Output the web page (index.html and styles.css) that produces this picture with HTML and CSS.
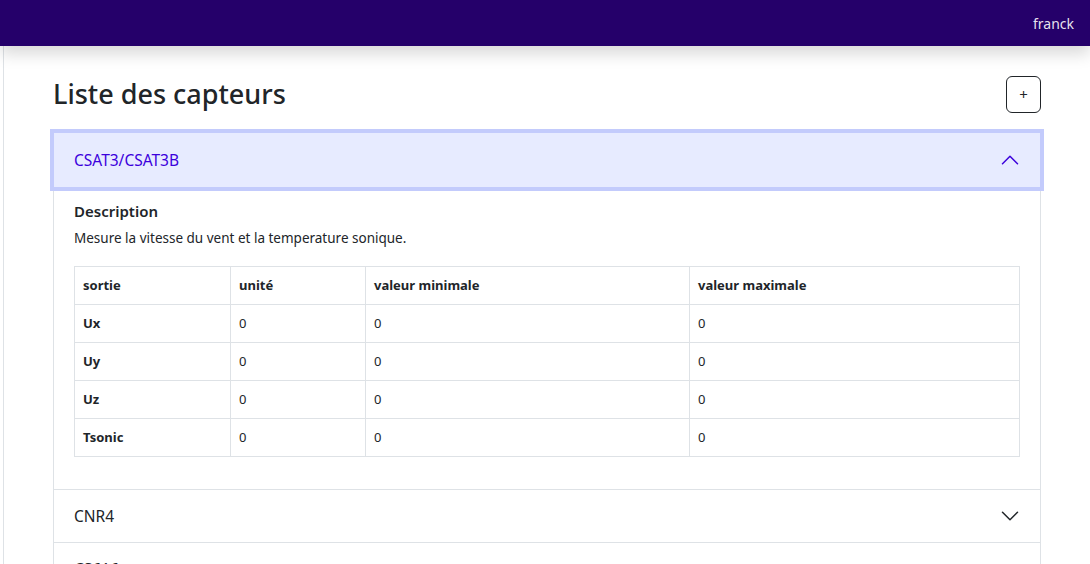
FILE: index.html
```html
<!DOCTYPE html>
<html lang="fr">
<head>
<meta charset="utf-8">
<title>Liste des capteurs</title>
<link rel="stylesheet" href="styles.css">
</head>
<body>
<header class="navbar">
  <span class="navbar-user">franck</span>
</header>
<div class="layout">
  <aside class="sidebar"></aside>
  <main class="main">
    <div class="title-row">
      <h1 class="page-title">Liste des capteurs</h1>
      <button class="btn-add" type="button">+</button>
    </div>
    <div class="accordion">
      <div class="acc-item">
        <button class="acc-button active" type="button">
          <span>CSAT3/CSAT3B</span>
          <svg class="chev up" viewBox="0 0 16 16" fill="none" stroke="currentColor" stroke-linecap="round" stroke-linejoin="round"><path d="M2 5L8 11L14 5"/></svg>
        </button>
        <div class="acc-body">
          <h5 class="desc-title">Description</h5>
          <p class="desc-text">Mesure la vitesse du vent et la temperature sonique.</p>
          <table class="table">
            <colgroup>
              <col class="c1"><col class="c2"><col class="c3"><col class="c4">
            </colgroup>
            <thead>
              <tr><th>sortie</th><th>unité</th><th>valeur minimale</th><th>valeur maximale</th></tr>
            </thead>
            <tbody>
              <tr><th>Ux</th><td>0</td><td>0</td><td>0</td></tr>
              <tr><th>Uy</th><td>0</td><td>0</td><td>0</td></tr>
              <tr><th>Uz</th><td>0</td><td>0</td><td>0</td></tr>
              <tr><th>Tsonic</th><td>0</td><td>0</td><td>0</td></tr>
            </tbody>
          </table>
        </div>
      </div>
      <div class="acc-item">
        <button class="acc-button" type="button">
          <span>CNR4</span>
          <svg class="chev" viewBox="0 0 16 16" fill="none" stroke="currentColor" stroke-linecap="round" stroke-linejoin="round"><path d="M2 5L8 11L14 5"/></svg>
        </button>
      </div>
      <div class="acc-item">
        <button class="acc-button" type="button">
          <span>CS616</span>
          <svg class="chev" viewBox="0 0 16 16" fill="none" stroke="currentColor" stroke-linecap="round" stroke-linejoin="round"><path d="M2 5L8 11L14 5"/></svg>
        </button>
      </div>
    </div>
  </main>
</div>
</body>
</html>
```
FILE: styles.css
```css
* { box-sizing: border-box; }
html, body { height: 100%; }
body {
  margin: 0;
  font-family: "Noto Sans", "Open Sans", sans-serif;
  font-size: 16px;
  color: #212529;
  background: #fff;
  overflow: hidden;
}
.navbar {
  height: 46px;
  background: #25006a;
  display: flex;
  align-items: center;
  justify-content: flex-end;
  padding: 0 16px;
  position: relative;
  z-index: 2;
  box-shadow: 0 8px 16px rgba(0,0,0,.15);
}
.navbar-user {
  color: rgba(255,255,255,.9);
  font-size: 14px;
}
.layout {
  display: flex;
  min-height: calc(100% - 46px);
}
.sidebar {
  width: 4px;
  border-right: 1px solid #dee2e6;
  flex: none;
}
.main {
  flex: 1;
  padding: 30px 49px 0 49px;
}
.title-row {
  display: flex;
  justify-content: space-between;
  align-items: center;
  margin-bottom: 19px;
}
.page-title {
  margin: 0;
  font-size: 27px;
  font-weight: 500;
  line-height: 1.2;
  color: #212529;
}
.btn-add {
  width: 35px;
  height: 37px;
  border: 1px solid #212529;
  border-radius: 6px;
  background: #fff;
  color: #212529;
  font-family: inherit;
  font-size: 15px;
  line-height: 1;
  padding: 0;
}
.accordion {
  border: 1px solid #dee2e6;
  border-bottom: 0;
}
.acc-item + .acc-item {
  border-top: 1px solid #dee2e6;
}
.acc-button {
  display: flex;
  align-items: center;
  justify-content: space-between;
  width: 100%;
  height: 52px;
  padding: 0 20px;
  border: 0;
  background: #fff;
  font-family: inherit;
  font-size: 15.5px;
  color: #212529;
  text-align: left;
}
.acc-button.active {
  background: #e7ebff;
  color: #3c00dc;
  box-shadow: 0 0 0 4px #c3cbfc;
  position: relative;
  z-index: 1;
  height: 54px;
}
.chev {
  width: 20px;
  height: 20px;
  stroke-width: 1.2;
  color: #212529;
}
.chev.up {
  transform: rotate(180deg);
  color: #3c00dc;
}
.acc-body {
  padding: 15px 20px 16px 20px;
}
.desc-title {
  margin: 0 0 8px 0;
  font-size: 15px;
  font-weight: 600;
  line-height: 1.2;
}
.desc-text {
  margin: 0 0 17px 0;
  font-size: 13.5px;
  line-height: 21px;
}
.table {
  width: 100%;
  border-collapse: collapse;
  font-size: 13px;
  margin-bottom: 16px;
}
.table th, .table td {
  border: 1px solid #dee2e6;
  padding: 8px 8px;
  line-height: 21px;
  text-align: left;
}
.table th { font-weight: 700; }
.c1 { width: 156px; }
.c2 { width: 135px; }
.c3 { width: 324px; }
.c4 { width: auto; }
```
